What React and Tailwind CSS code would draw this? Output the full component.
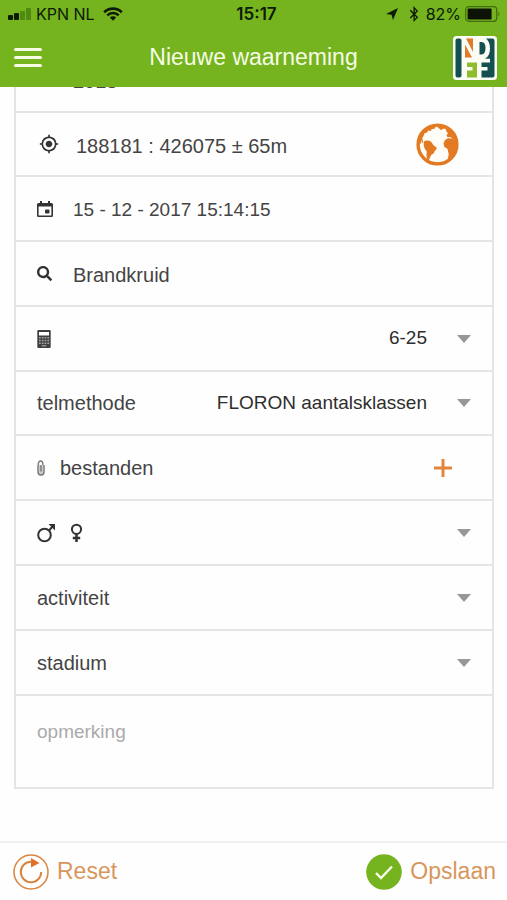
import { MdGpsFixed } from "react-icons/md";
import { FaSearch, FaBluetoothB } from "react-icons/fa";

function SignalBars() {
  return (
    <svg viewBox="0 0 24 12" className="h-3 w-6" aria-hidden="true">
      <rect x="0" y="7" width="5" height="5" rx="1" fill="#0d1a05" />
      <rect x="6" y="5" width="5" height="7" rx="1" fill="#0d1a05" />
      <rect x="12" y="3" width="5" height="9" rx="1" fill="#4f8a12" />
      <rect x="18" y="0" width="5" height="12" rx="1" fill="#4f8a12" />
    </svg>
  );
}

function Wifi() {
  return (
    <svg viewBox="0 0 20 14" className="h-[14px] w-5" fill="none" stroke="#0d1a05" aria-hidden="true">
      <path d="M1.2 5.2a12.6 12.6 0 0 1 17.6 0" strokeWidth="2.6" />
      <path d="M4.3 8.4a8.1 8.1 0 0 1 11.4 0" strokeWidth="2.4" />
      <path d="M10 13.8 6.8 10.6a4.6 4.6 0 0 1 6.4 0Z" fill="#0d1a05" stroke="none" />
    </svg>
  );
}

function Battery() {
  return (
    <svg viewBox="0 0 36 16" className="h-4 w-9" aria-hidden="true">
      <rect x="0.7" y="0.7" width="31" height="14.6" rx="3" fill="none" stroke="#3f6d10" strokeWidth="1.2" />
      <rect x="2.6" y="2.6" width="24" height="10.8" rx="1" fill="#0d1207" />
      <path d="M33.4 5.4q2 2.6 0 5.2Z" fill="#3f6d10" />
    </svg>
  );
}

function Logo() {
  return (
    <svg viewBox="0 0 44 44" className="h-11 w-11" role="img" aria-label="NDFF">
      <rect width="44" height="44" rx="3.5" fill="#fbfdf5" />
      <rect x="2.5" y="2.5" width="6" height="39" rx="2" fill="#14504f" />
      <path d="M13 2.500h7V16Z" fill="#e07a2c" />
      <path d="M12 8.500V21.500h7Z" fill="#e07a2c" />
      <path d="M14 26.500H24V41.500H14V34.500h5.500V31H14Z" fill="#8fbc2a" />
      <path d="M26.500 6H28.500c3 0 4 3 4 6s-1 6.500-4 6.500H26.500Z" fill="#14504f" />
      <path d="M33 2.500H39.500a2 2 0 0 1 2 2V39.500a2 2 0 0 1-2 2H28.500V34.500h6V31h-6V26.500H37V22.800H32c3.500-2 5-5.500 5-10.300 0-5-1.500-8-4-10Z" fill="#14504f" />
    </svg>
  );
}

function Globe() {
  return (
    <svg viewBox="4 4 43 43" className="h-[43px] w-[43px]" fill="#e37a22" aria-hidden="true">
      <circle cx="25.500" cy="25.500" r="19.400" fill="#fffdf8" stroke="#e37a22" strokeWidth="3.400" />
      <path d="M7 24c0-6 4-12 9-15l8-3-1 3.500-3.500.8-.6 1.700-2.600-.5-1.300 2-2.500.8-1 3-1.200 1.700 1 5-.8.3-1.200-3-.4 3.500Z" />
      <path d="m12 22.600 2-1.100 3.500.2 2.300 1.700 1.300 2.300 3.400 2.700.2 1.600-2 1.900-.9 2.300-2.600 1.900-1.300 2.700-1 2.400-1.500-.6-1-3.500.3-4.500-2.200-3.400-.8-3Z" />
      <path d="m33 8 5 3 5 7 1.500 3-3.500-.5-2.500-2.500-3 .3-1-2.300 1.600-1.500-1.600-2Z" />
      <path d="m24.500 7.500 6-.3 3 2.300-3 .5-1.500 1.300-1.500-1.600Z" />
      <path d="m31.500 24.600 1.500-3.600 3-1.800 3.500.3 1.500.8 3.800.3L46 26l-1.500 7-4 5.800-3.600 3.200-.9-3 .7-3.700-.7-3.300-.6-2.300-3-1.700Z" />
    </svg>
  );
}

function CalendarIcon() {
  return (
    <svg viewBox="0 0 16 16" className="h-4 w-4" fill="#333" aria-hidden="true">
      <path d="M3 0h2v2h6V0h2v2h1.500A1.500 1.500 0 0 1 16 3.500v11a1.500 1.500 0 0 1-1.500 1.500h-13A1.500 1.500 0 0 1 0 14.500v-11A1.500 1.500 0 0 1 1.500 2H3ZM1.600 5.500v8.900h12.800V5.500Z" fillRule="evenodd" />
      <rect x="8" y="8.500" width="4.500" height="4" rx="1" />
    </svg>
  );
}

function Calculator() {
  return (
    <svg viewBox="0 0 14 18" className="h-[18px] w-[14px]" aria-hidden="true">
      <rect x="0.300" y="0" width="13.400" height="18" rx="1.200" fill="#3f3f3f" />
      <rect x="2" y="2" width="10" height="3.500" fill="#fff" />
      <g fill="#a5a5a5">
        <path d="M2 7h1.700v1.500H2zM4.800 7h1.700v1.500H4.800zM7.600 7h1.700v1.500H7.600zM10.400 7h1.700v1.500h-1.700z" />
        <path d="M2 9.800h1.700v1.500H2zM4.800 9.800h1.700v1.500H4.800zM7.600 9.800h1.700v1.500H7.600zM10.400 9.800h1.700v1.500h-1.700z" />
        <path d="M2 12.500h1.700V14H2zM4.800 12.500h1.700V14H4.800zM7.600 12.500h1.700V14H7.600zM10.400 12.500h1.700V14h-1.700z" />
        <path d="M4.800 15.200h4.500v1.200H4.800z" />
      </g>
    </svg>
  );
}

function Paperclip() {
  return (
    <svg viewBox="0 0 8 16" className="h-4 w-2" fill="none" stroke="#777" strokeWidth="1.400" aria-hidden="true">
      <rect x="1" y="5" width="6" height="10" rx="3" fill="#ccc" stroke="none" />
      <path d="M4 5v6.500M5.800 5V3.200a2.200 2.200 0 0 0-4.400 0v2M1 5v7a3 3 0 0 0 6 0V5" />
    </svg>
  );
}

function Sexes() {
  return (
    <svg viewBox="0 0 46 20" className="h-5 w-[46px]" fill="none" stroke="#333" strokeWidth="2" aria-hidden="true">
      <circle cx="7.500" cy="12" r="6.300" />
      <path d="m12 7.500 4-4.500" />
      <path d="M11.500 1H18v6.500Z" fill="#333" stroke="none" />
      <circle cx="39.500" cy="6.300" r="4.600" />
      <path d="M39.500 11v8M35.800 15h7.400" strokeWidth="2.500" />
    </svg>
  );
}

function Row({ className = "h-[65px]", children }) {
  return (
    <div className={`flex items-center border-b-2 border-[#e5e5e5] pl-[21px] ${className}`}>
      {children}
    </div>
  );
}

function SelectRow({ id, label, ariaLabel, value = "", className }) {
  return (
    <Row className={className}>
      <label htmlFor={id} className="shrink-0 text-[20px]">{label}</label>
      <div className="relative ml-2 h-full grow">
        <select
          id={id}
          aria-label={ariaLabel}
          className="h-full w-full appearance-none bg-transparent pr-[65px] text-right text-[19px] text-[#2e2e2e] outline-none [text-align-last:right]"
        >
          <option>{value}</option>
        </select>
        <svg viewBox="0 0 14 8" className="pointer-events-none absolute top-1/2 right-[21px] h-2 w-[14px] -translate-y-1/2" aria-hidden="true">
          <path d="M0 0h14L7 8Z" fill="#979797" />
        </svg>
      </div>
    </Row>
  );
}

export default function App() {
  return (
    <div className="flex min-h-screen flex-col bg-[#fefefe] font-['Liberation_Sans',Arial,sans-serif] text-[#444]">
      <header className="bg-[#75b41e]">
        <div className="grid grid-cols-[1fr_auto_1fr] items-center pt-[2px] pr-[2px] pl-2 font-[Inter,sans-serif] text-[16px] leading-6 text-[#0d1a05]">
          <div className="flex items-center">
            <SignalBars />
            <span className="mr-2 ml-1">KPN NL</span>
            <Wifi />
          </div>
          <span className="text-[17px] font-semibold">15:17</span>
          <div className="flex items-center justify-end pr-1">
            <svg viewBox="0 0 12 12" className="h-3 w-3" fill="#0d1a05" aria-hidden="true">
              <path d="M12 0 0 6l5.500.7L7 12Z" />
            </svg>
            <FaBluetoothB size={16} className="mr-1 ml-2" />
            <span className="mr-1">82%</span>
            <Battery />
          </div>
        </div>
        <div className="grid h-[61px] grid-cols-[1fr_auto_1fr] items-center px-[10px] pt-[2px]">
          <button aria-label="Menu" className="ml-1 flex w-7 flex-col gap-[5px]">
            <span className="h-[3px] rounded-full bg-[#f6fbe6]" />
            <span className="h-[3px] rounded-full bg-[#f6fbe6]" />
            <span className="h-[3px] rounded-full bg-[#f6fbe6]" />
          </button>
          <h1 className="text-[23px] text-[#f6fbe6]">Nieuwe waarneming</h1>
          <div className="flex justify-end"><Logo /></div>
        </div>
      </header>

      <main className="mr-[13px] ml-[14px] border-x-2 border-[#e5e5e5]">
        <Row className="h-[26px] overflow-hidden">
          <span className="mb-9 ml-9 text-[20px] leading-6">2018</span>
        </Row>
        <Row className="h-[64px]">
          <MdGpsFixed size={20} className="ml-[2px] text-[#333]" />
          <input aria-label="Locatie" defaultValue="188181 : 426075 ± 65m" className="ml-[17px] min-w-0 grow bg-transparent pt-[3px] text-[20px] outline-none" />
          <button aria-label="Kaart" className="mr-[33px] shrink-0"><Globe /></button>
        </Row>
        <Row>
          <CalendarIcon />
          <input aria-label="Datum" defaultValue="15 - 12 - 2017 15:14:15" className="ml-5 min-w-0 grow bg-transparent pt-[3px] text-[19px] outline-none" />
        </Row>
        <Row>
          <FaSearch size={15} className="text-[#333]" />
          <input aria-label="Soort" defaultValue="Brandkruid" className="ml-[21px] min-w-0 grow bg-transparent pt-[3px] text-[20px] outline-none" />
        </Row>
        <SelectRow id="aantal" ariaLabel="Aantal" label={<Calculator />} value="6-25" />
        <SelectRow id="telmethode" label="telmethode" value="FLORON aantalsklassen" className="h-[64px]" />
        <Row>
          <Paperclip />
          <span className="ml-[15px] text-[20px]">bestanden</span>
          <button aria-label="Bestand toevoegen" className="mr-10 ml-auto">
            <svg viewBox="0 0 18 18" className="h-[18px] w-[18px]" aria-hidden="true">
              <path d="M9 0v18M0 9h18" stroke="#e5853a" strokeWidth="3" />
            </svg>
          </button>
        </Row>
        <SelectRow id="geslacht" ariaLabel="Geslacht" label={<Sexes />} />
        <SelectRow id="activiteit" label="activiteit" />
        <SelectRow id="stadium" label="stadium" />
        <textarea
          aria-label="opmerking"
          placeholder="opmerking"
          className="block h-[93px] w-full resize-none border-b-2 border-[#e5e5e5] bg-transparent px-[21px] pt-6 text-[19px] leading-6 outline-none placeholder:text-[#aaa]"
        />
      </main>

      <footer className="mt-auto flex h-[59px] items-center justify-between border-t-2 border-[#f0f0f0] pr-[11px] pl-[13px] text-[23px] text-[#d8965c]">
        <button className="flex items-center gap-2">
          <svg viewBox="0 0 36 36" className="h-9 w-9" fill="none" stroke="#d9853f" aria-hidden="true">
            <circle cx="18" cy="18" r="17" strokeWidth="1.500" />
            <path d="M28.200 18A10.200 10.200 0 1 1 18 7.800" strokeWidth="2" />
            <path d="M18 4v9.500l8.500-4.500Z" fill="#e0702a" stroke="none" />
          </svg>
          Reset
        </button>
        <button className="flex items-center gap-2">
          <svg viewBox="0 0 36 36" className="h-9 w-9" aria-hidden="true">
            <circle cx="18" cy="18" r="17.800" fill="#75b41e" />
            <path d="m10 19 5 5L26 12.500" fill="none" stroke="#fbfff0" strokeWidth="2.400" />
          </svg>
          Opslaan
        </button>
      </footer>
    </div>
  );
}
